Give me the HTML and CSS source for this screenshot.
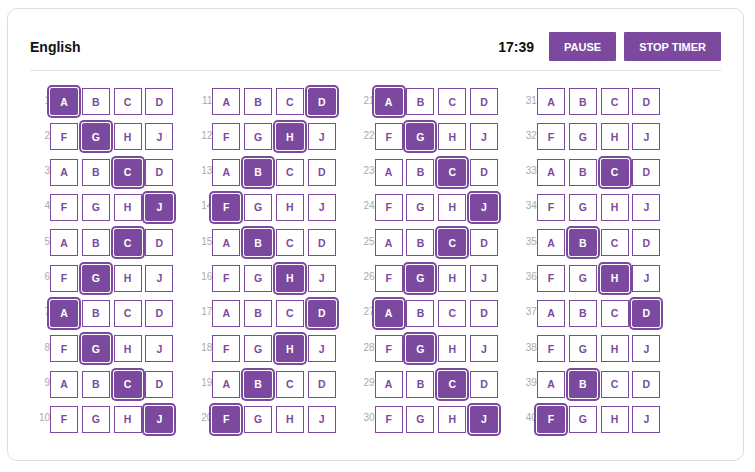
FILE: index.html
```html
<!DOCTYPE html>
<html>
<head>
<meta charset="utf-8">
<link rel="stylesheet" href="styles.css">
</head>
<body>
<div class="card">
  <div class="header">
    <div class="title">English</div>
    <div class="controls">
      <span class="timer">17:39</span>
      <button class="btn">PAUSE</button>
      <button class="btn">STOP TIMER</button>
    </div>
  </div>
  <div class="divider"></div>
  <div class="grid">
    <div class="col">
      <div class="row"><span class="num">1</span><span class="box sel">A</span><span class="box">B</span><span class="box">C</span><span class="box">D</span></div>
      <div class="row"><span class="num">2</span><span class="box">F</span><span class="box sel">G</span><span class="box">H</span><span class="box">J</span></div>
      <div class="row"><span class="num">3</span><span class="box">A</span><span class="box">B</span><span class="box sel">C</span><span class="box">D</span></div>
      <div class="row"><span class="num">4</span><span class="box">F</span><span class="box">G</span><span class="box">H</span><span class="box sel">J</span></div>
      <div class="row"><span class="num">5</span><span class="box">A</span><span class="box">B</span><span class="box sel">C</span><span class="box">D</span></div>
      <div class="row"><span class="num">6</span><span class="box">F</span><span class="box sel">G</span><span class="box">H</span><span class="box">J</span></div>
      <div class="row"><span class="num">7</span><span class="box sel">A</span><span class="box">B</span><span class="box">C</span><span class="box">D</span></div>
      <div class="row"><span class="num">8</span><span class="box">F</span><span class="box sel">G</span><span class="box">H</span><span class="box">J</span></div>
      <div class="row"><span class="num">9</span><span class="box">A</span><span class="box">B</span><span class="box sel">C</span><span class="box">D</span></div>
      <div class="row"><span class="num">10</span><span class="box">F</span><span class="box">G</span><span class="box">H</span><span class="box sel">J</span></div>
    </div>
    <div class="col">
      <div class="row"><span class="num">11</span><span class="box">A</span><span class="box">B</span><span class="box">C</span><span class="box sel">D</span></div>
      <div class="row"><span class="num">12</span><span class="box">F</span><span class="box">G</span><span class="box sel">H</span><span class="box">J</span></div>
      <div class="row"><span class="num">13</span><span class="box">A</span><span class="box sel">B</span><span class="box">C</span><span class="box">D</span></div>
      <div class="row"><span class="num">14</span><span class="box sel">F</span><span class="box">G</span><span class="box">H</span><span class="box">J</span></div>
      <div class="row"><span class="num">15</span><span class="box">A</span><span class="box sel">B</span><span class="box">C</span><span class="box">D</span></div>
      <div class="row"><span class="num">16</span><span class="box">F</span><span class="box">G</span><span class="box sel">H</span><span class="box">J</span></div>
      <div class="row"><span class="num">17</span><span class="box">A</span><span class="box">B</span><span class="box">C</span><span class="box sel">D</span></div>
      <div class="row"><span class="num">18</span><span class="box">F</span><span class="box">G</span><span class="box sel">H</span><span class="box">J</span></div>
      <div class="row"><span class="num">19</span><span class="box">A</span><span class="box sel">B</span><span class="box">C</span><span class="box">D</span></div>
      <div class="row"><span class="num">20</span><span class="box sel">F</span><span class="box">G</span><span class="box">H</span><span class="box">J</span></div>
    </div>
    <div class="col">
      <div class="row"><span class="num">21</span><span class="box sel">A</span><span class="box">B</span><span class="box">C</span><span class="box">D</span></div>
      <div class="row"><span class="num">22</span><span class="box">F</span><span class="box sel">G</span><span class="box">H</span><span class="box">J</span></div>
      <div class="row"><span class="num">23</span><span class="box">A</span><span class="box">B</span><span class="box sel">C</span><span class="box">D</span></div>
      <div class="row"><span class="num">24</span><span class="box">F</span><span class="box">G</span><span class="box">H</span><span class="box sel">J</span></div>
      <div class="row"><span class="num">25</span><span class="box">A</span><span class="box">B</span><span class="box sel">C</span><span class="box">D</span></div>
      <div class="row"><span class="num">26</span><span class="box">F</span><span class="box sel">G</span><span class="box">H</span><span class="box">J</span></div>
      <div class="row"><span class="num">27</span><span class="box sel">A</span><span class="box">B</span><span class="box">C</span><span class="box">D</span></div>
      <div class="row"><span class="num">28</span><span class="box">F</span><span class="box sel">G</span><span class="box">H</span><span class="box">J</span></div>
      <div class="row"><span class="num">29</span><span class="box">A</span><span class="box">B</span><span class="box sel">C</span><span class="box">D</span></div>
      <div class="row"><span class="num">30</span><span class="box">F</span><span class="box">G</span><span class="box">H</span><span class="box sel">J</span></div>
    </div>
    <div class="col">
      <div class="row"><span class="num">31</span><span class="box">A</span><span class="box">B</span><span class="box">C</span><span class="box">D</span></div>
      <div class="row"><span class="num">32</span><span class="box">F</span><span class="box">G</span><span class="box">H</span><span class="box">J</span></div>
      <div class="row"><span class="num">33</span><span class="box">A</span><span class="box">B</span><span class="box sel">C</span><span class="box">D</span></div>
      <div class="row"><span class="num">34</span><span class="box">F</span><span class="box">G</span><span class="box">H</span><span class="box">J</span></div>
      <div class="row"><span class="num">35</span><span class="box">A</span><span class="box sel">B</span><span class="box">C</span><span class="box">D</span></div>
      <div class="row"><span class="num">36</span><span class="box">F</span><span class="box">G</span><span class="box sel">H</span><span class="box">J</span></div>
      <div class="row"><span class="num">37</span><span class="box">A</span><span class="box">B</span><span class="box">C</span><span class="box sel">D</span></div>
      <div class="row"><span class="num">38</span><span class="box">F</span><span class="box">G</span><span class="box">H</span><span class="box">J</span></div>
      <div class="row"><span class="num">39</span><span class="box">A</span><span class="box sel">B</span><span class="box">C</span><span class="box">D</span></div>
      <div class="row"><span class="num">40</span><span class="box sel">F</span><span class="box">G</span><span class="box">H</span><span class="box">J</span></div>
    </div>
  </div>
</div>
</body>
</html>
```
FILE: styles.css
```css
html, body {
  margin: 0;
  padding: 0;
  background: #ffffff;
}
body {
  padding: 8px 0 0 7px;
  font-family: "Liberation Sans", Arial, sans-serif;
}
.card {
  box-sizing: border-box;
  width: 737px;
  height: 453px;
  border: 1px solid #deded9;
  border-radius: 10px;
  padding: 23px 22px 0 22px;
  background: #fff;
}
.header {
  display: flex;
  align-items: center;
  justify-content: space-between;
  height: 29px;
}
.title {
  font-size: 14px;
  font-weight: bold;
  color: #111;
}
.controls {
  display: flex;
  align-items: center;
  gap: 8px;
}
.timer {
  font-size: 14px;
  font-weight: bold;
  color: #111;
  margin-right: 7px;
}
.btn {
  height: 29px;
  padding: 0 15px;
  border: none;
  border-radius: 1px;
  background: #7b4a9e;
  color: #fff;
  font-family: "Liberation Sans", Arial, sans-serif;
  font-size: 11px;
  font-weight: bold;
}
.divider {
  margin-top: 9px;
  height: 1px;
  background: #e2e2e0;
}
.grid {
  margin-top: 17px;
  display: grid;
  grid-template-columns: repeat(4, 144.4px);
  column-gap: 17.93px;
}
.col {
  display: flex;
  flex-direction: column;
  gap: 8.33px;
}
.row {
  display: flex;
  align-items: center;
  height: 27px;
}
.num {
  width: 20px;
  text-align: right;
  font-size: 10px;
  line-height: 10px;
  color: #aaaaaa;
  margin-top: -2px;
}
.box {
  box-sizing: border-box;
  width: 28px;
  height: 27px;
  margin-right: 3.8px;
  border: 1px solid #7b4a9e;
  display: flex;
  align-items: center;
  justify-content: center;
  font-size: 10.5px;
  font-weight: bold;
  color: #7b4a9e;
  background: #fff;
}
.box:last-child {
  margin-right: 0;
}
.box.sel {
  position: relative;
  z-index: 1;
  background: #7b4a9e;
  color: #fff;
  border-radius: 2px;
  box-shadow: 0 0 0 1px #fff, 0 0 0 3px #7b4a9e;
}
```
